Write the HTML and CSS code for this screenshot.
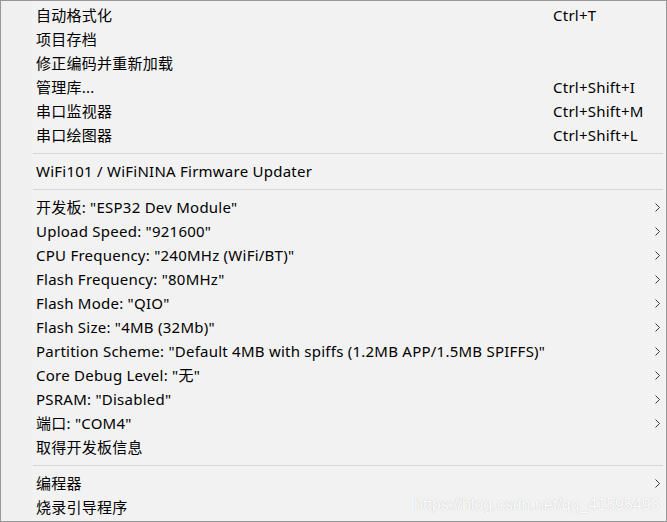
FILE: index.html
```html
<!DOCTYPE html>
<html lang="zh-CN">
<head>
<meta charset="utf-8">
<title>工具</title>
<link rel="stylesheet" href="styles.css">
</head>
<body>
<div class="menu">
  <div class="gutter"></div>
  <div class="item"><span class="label">自动格式化</span><span class="key">Ctrl+T</span><span class="arrow"></span></div>
  <div class="item"><span class="label">项目存档</span><span class="key"></span><span class="arrow"></span></div>
  <div class="item"><span class="label">修正编码并重新加载</span><span class="key"></span><span class="arrow"></span></div>
  <div class="item"><span class="label">管理库...</span><span class="key">Ctrl+Shift+I</span><span class="arrow"></span></div>
  <div class="item"><span class="label">串口监视器</span><span class="key">Ctrl+Shift+M</span><span class="arrow"></span></div>
  <div class="item"><span class="label">串口绘图器</span><span class="key">Ctrl+Shift+L</span><span class="arrow"></span></div>
  <div class="sep"></div>
  <div class="item"><span class="label">WiFi101 / WiFiNINA Firmware Updater</span><span class="key"></span><span class="arrow"></span></div>
  <div class="sep"></div>
  <div class="item"><span class="label">开发板: "ESP32 Dev Module"</span><span class="key"></span><span class="arrow"><svg viewBox="0 0 5 9" width="5" height="9"><polyline points="0.5,0.5 4.5,4.5 0.5,8.5"/></svg></span></div>
  <div class="item"><span class="label">Upload Speed: "921600"</span><span class="key"></span><span class="arrow"><svg viewBox="0 0 5 9" width="5" height="9"><polyline points="0.5,0.5 4.5,4.5 0.5,8.5"/></svg></span></div>
  <div class="item"><span class="label">CPU Frequency: "240MHz (WiFi/BT)"</span><span class="key"></span><span class="arrow"><svg viewBox="0 0 5 9" width="5" height="9"><polyline points="0.5,0.5 4.5,4.5 0.5,8.5"/></svg></span></div>
  <div class="item"><span class="label">Flash Frequency: "80MHz"</span><span class="key"></span><span class="arrow"><svg viewBox="0 0 5 9" width="5" height="9"><polyline points="0.5,0.5 4.5,4.5 0.5,8.5"/></svg></span></div>
  <div class="item"><span class="label">Flash Mode: "QIO"</span><span class="key"></span><span class="arrow"><svg viewBox="0 0 5 9" width="5" height="9"><polyline points="0.5,0.5 4.5,4.5 0.5,8.5"/></svg></span></div>
  <div class="item"><span class="label">Flash Size: "4MB (32Mb)"</span><span class="key"></span><span class="arrow"><svg viewBox="0 0 5 9" width="5" height="9"><polyline points="0.5,0.5 4.5,4.5 0.5,8.5"/></svg></span></div>
  <div class="item"><span class="label">Partition Scheme: "Default 4MB with spiffs (1.2MB APP/1.5MB SPIFFS)"</span><span class="key"></span><span class="arrow"><svg viewBox="0 0 5 9" width="5" height="9"><polyline points="0.5,0.5 4.5,4.5 0.5,8.5"/></svg></span></div>
  <div class="item"><span class="label">Core Debug Level: "无"</span><span class="key"></span><span class="arrow"><svg viewBox="0 0 5 9" width="5" height="9"><polyline points="0.5,0.5 4.5,4.5 0.5,8.5"/></svg></span></div>
  <div class="item"><span class="label">PSRAM: "Disabled"</span><span class="key"></span><span class="arrow"><svg viewBox="0 0 5 9" width="5" height="9"><polyline points="0.5,0.5 4.5,4.5 0.5,8.5"/></svg></span></div>
  <div class="item"><span class="label">端口: "COM4"</span><span class="key"></span><span class="arrow"><svg viewBox="0 0 5 9" width="5" height="9"><polyline points="0.5,0.5 4.5,4.5 0.5,8.5"/></svg></span></div>
  <div class="item"><span class="label">取得开发板信息</span><span class="key"></span><span class="arrow"></span></div>
  <div class="sep"></div>
  <div class="item"><span class="label">编程器</span><span class="key"></span><span class="arrow"><svg viewBox="0 0 5 9" width="5" height="9"><polyline points="0.5,0.5 4.5,4.5 0.5,8.5"/></svg></span></div>
  <div class="item"><span class="label">烧录引导程序</span><span class="key"></span><span class="arrow"></span></div>
  <div class="watermark">https://blog.csdn.net/qq_41595493</div>
</div>
</body>
</html>
```

FILE: styles.css
```css
html, body {
  margin: 0;
  padding: 0;
  background: #f2f2f2;
}

.menu {
  position: relative;
  width: 667px;
  height: 522px;
  box-sizing: border-box;
  border: 1px solid #979797;
  padding: 3px 0 1px 0;
  background: #f2f2f2;
  font-family: "Noto Sans", "Noto Sans CJK SC", sans-serif;
  font-size: 15px;
  letter-spacing: 0.24px;
  color: #000;
  display: flex;
  flex-direction: column;
}

.gutter {
  position: absolute;
  left: 0;
  top: 0;
  bottom: 0;
  width: 31px;
  background: #f0f0f0;
}

.item {
  position: relative;
  height: 24px;
  box-sizing: border-box;
  display: grid;
  grid-template-columns: 1fr 102px 5px;
  align-items: center;
  padding: 0 6px 2px 35px;
  white-space: nowrap;
  line-height: 22px;
}

.key {
  font-family: "Noto Sans", sans-serif;
}

.arrow {
  display: flex;
  align-items: center;
  height: 22px;
}

.arrow svg {
  display: block;
  fill: none;
  stroke: #3a3a3a;
  stroke-width: 1;
}

.sep {
  position: relative;
  height: 12px;
  box-sizing: border-box;
  padding-top: 5px;
  margin: 0 3px 0 32px;
}

.sep::after {
  content: "";
  display: block;
  height: 1px;
  background: #d7d7d7;
}

.watermark {
  position: absolute;
  left: 413px;
  top: 495px;
  font-family: "Liberation Sans", Arial, sans-serif;
  font-size: 16px;
  letter-spacing: 0;
  color: #fdfdfd;
  text-shadow: 0 0 1px #c6c6c6, 0 0 1px #d4d4d4;
  white-space: nowrap;
}
```
